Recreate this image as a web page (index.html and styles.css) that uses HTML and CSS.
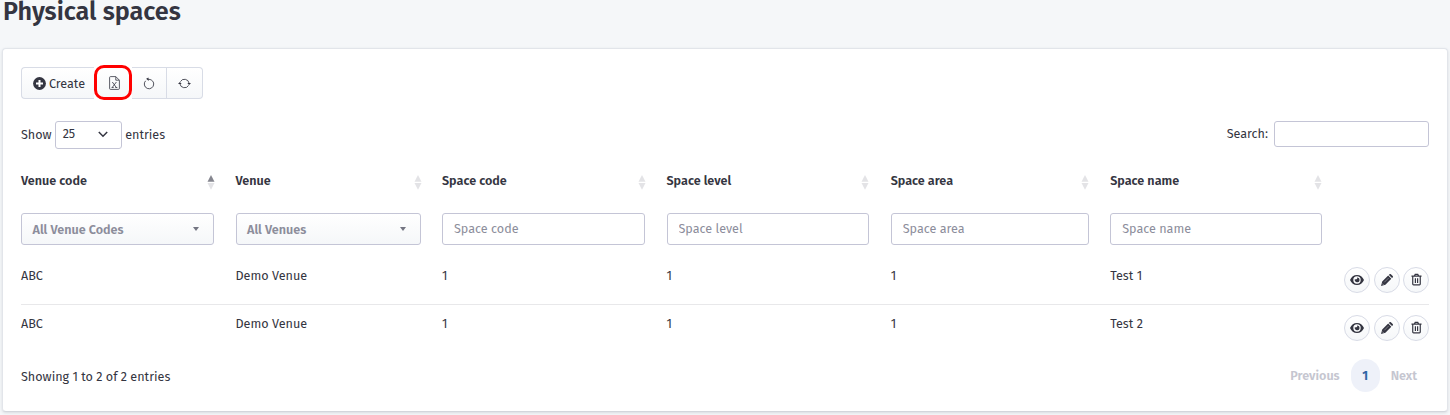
FILE: index.html
```
<!DOCTYPE html>
<html lang="en">
<head>
<meta charset="utf-8">
<title>Physical spaces</title>
<link rel="stylesheet" href="styles.css">
</head>
<body>
<svg class="sprite" aria-hidden="true">
  <symbol id="eye" viewBox="0 0 14 10"><path fill-rule="evenodd" fill="currentColor" d="M7 0C3.8 0 1.300 1.900 0 5c1.300 3.100 3.800 5 7 5s5.700-1.900 7-5C12.700 1.900 10.200 0 7 0zm0 1.300a3.700 3.700 0 1 1 0 7.400a3.700 3.700 0 0 1 0-7.400zm0 1.100c.5.700.2 1.700-.6 1.900-.6.200-1.100.1-1.500-.2A2.400 2.400 0 1 0 7 2.400z"/></symbol>
  <symbol id="pencil" viewBox="0 0 12 12"><path fill="currentColor" d="M1.200 7.500 7.200 1.600 10.300 4.700 4.400 10.700 0 12zM7.900.9 8.500.3c.4-.4 1-.4 1.400 0l1.800 1.800c.4.400.4 1 0 1.400L11 4.100z"/><path d="M3.300 8.300 7.700 3.900" stroke="#fff" stroke-width=".35"/><path d="M1.300 9.600 2.400 10.700" stroke="#fff" stroke-width=".6"/></symbol>
  <symbol id="trash" viewBox="0 0 12 13"><path fill="none" stroke="currentColor" stroke-width="1.300" d="M.5 2.900h11M3.700 2.700 4.600.9h2.800l.9 1.800M1.900 3v8.400c0 .5.300.9.900.9h6.400c.6 0 .9-.4.900-.9V3M4.800 5v5.300M7.200 5v5.300"/></symbol>
  <symbol id="sort" viewBox="0 0 8 15"><path class="up" d="M4 0 7.500 6.800h-7z"/><path class="down" d="M4 14.700 7.500 7.900h-7z"/></symbol>
</svg>
<h1 class="title">Physical spaces</h1>
<main class="card">
  <div class="toolbar">
    <button class="tool create"><svg width="13" height="13" viewBox="0 0 13 13"><circle cx="6.500" cy="6.500" r="6.400" fill="#343541"/><path d="M6.500 3v7M3 6.500h7" stroke="#fff" stroke-width="2"/></svg><span>Create</span></button>
    <button class="tool export" aria-label="Export"><svg width="11" height="14" viewBox="0 0 11 14" fill="none" stroke="#343541"><path d="M.6 1.500c0-.5.300-.9.900-.9h5.300l3.600 3.600v8.300c0 .5-.3.900-.9.900h-8c-.6 0-.9-.4-.9-.9zM6.800.8v3.400h3.400M3.300 6l4 5.500M7.400 6l-4.200 5.500M2.700 11.500h2M6.300 11.500h2" stroke-width=".8"/></svg></button>
    <button class="tool" aria-label="Reset"><svg width="12" height="13" viewBox="0 0 12 13"><path d="M4.800 2.400C8 1.900 10.700 4.200 10.700 7A4.700 4.700 0 1 1 2.600 3.800" fill="none" stroke="#343541" stroke-width=".85"/><path d="M3.100 1.700 5.500.5 5.700 3.900z" fill="#343541"/></svg></button>
    <button class="tool" aria-label="Reload"><svg width="13" height="11" viewBox="0 0 13 11"><path d="M2.400 3.600a4.700 4.700 0 0 1 8.700 1.600M10.600 7.400A4.700 4.700 0 0 1 1.900 5.800" fill="none" stroke="#343541" stroke-width=".85"/><path d="M9.300 5H13L11.100 7zM0 6h3.700L1.900 4z" fill="#343541"/></svg></button>
  </div>
  <div class="controls">
    <div class="length"><span>Show</span><div class="select"><span>25</span><svg width="10" height="7" viewBox="0 0 10 7"><path d="M.8 1 5 5.300 9.200 1" fill="none" stroke="#343541" stroke-width="1.500"/></svg></div><span>entries</span></div>
    <label class="search"><span>Search:</span><input type="text" aria-label="Search"></label>
  </div>
  <div class="row head">
    <div class="th"><span>Venue code</span><svg class="sort asc"><use href="#sort"/></svg></div>
    <div class="th"><span>Venue</span><svg class="sort"><use href="#sort"/></svg></div>
    <div class="th"><span>Space code</span><svg class="sort"><use href="#sort"/></svg></div>
    <div class="th"><span>Space level</span><svg class="sort"><use href="#sort"/></svg></div>
    <div class="th"><span>Space area</span><svg class="sort"><use href="#sort"/></svg></div>
    <div class="th"><span>Space name</span><svg class="sort"><use href="#sort"/></svg></div>
  </div>
  <div class="row filters">
    <div class="dropdown"><span>All Venue Codes</span><i class="caret"></i></div>
    <div class="dropdown"><span>All Venues</span><i class="caret"></i></div>
    <input class="field" placeholder="Space code">
    <input class="field" placeholder="Space level">
    <input class="field" placeholder="Space area">
    <input class="field" placeholder="Space name">
  </div>
  <div class="row data">
    <span>ABC</span><span>Demo Venue</span><span>1</span><span>1</span><span>1</span><span>Test 1</span>
    <div class="actions"><button class="round" aria-label="View"><svg width="14" height="10"><use href="#eye"/></svg></button><button class="round" aria-label="Edit"><svg width="12" height="12"><use href="#pencil"/></svg></button><button class="round" aria-label="Delete"><svg width="11" height="13"><use href="#trash"/></svg></button></div>
  </div>
  <div class="row data">
    <span>ABC</span><span>Demo Venue</span><span>1</span><span>1</span><span>1</span><span>Test 2</span>
    <div class="actions"><button class="round" aria-label="View"><svg width="14" height="10"><use href="#eye"/></svg></button><button class="round" aria-label="Edit"><svg width="12" height="12"><use href="#pencil"/></svg></button><button class="round" aria-label="Delete"><svg width="11" height="13"><use href="#trash"/></svg></button></div>
  </div>
  <div class="footer">
    <span>Showing 1 to 2 of 2 entries</span>
    <nav class="pager"><span>Previous</span><b class="current">1</b><span>Next</span></nav>
  </div>
</main>
</body>
</html>
```
FILE: styles.css
```
* { box-sizing: border-box; }
body {
  margin: 0;
  height: 415px;
  overflow: hidden;
  background: #f5f7f9;
  color: #343541;
  font: 12.6px/18px "Fira Sans", "Noto Sans", sans-serif;
}
button, input { font: inherit; color: inherit; margin: 0; }
svg { display: block; flex: none; }
.sprite { display: none; }
.title {
  margin: 0 0 0 3px;
  height: 48px;
  font-size: 25.2px;
  line-height: 24px;
  font-weight: 600;
}
.card {
  margin: 0 2px;
  height: 364px;
  padding: 18px 18px 0 18px;
  background: #fff;
  border: 1px solid #e2e5ea;
  border-bottom-color: #d3d6dc;
  border-radius: 4px;
  box-shadow: 0 1px 3px rgba(50, 60, 80, 0.14);
}
.toolbar { display: flex; width: 182px; height: 32px; }
.tool {
  display: flex;
  align-items: center;
  justify-content: center;
  gap: 4px;
  width: 35px;
  padding: 0;
  border: 1px solid #d8dce6;
  border-left-width: 0;
  background: linear-gradient(#fff, #f5f7f9);
}
.tool:last-child { width: 36px; border-radius: 0 4px 4px 0; }
.create { width: 73px; gap: 3px; padding-left: 2px; border-left-width: 1px; border-right: 0; border-radius: 4px 0 0 4px; }
.create span { padding-top: 1px; }
.export {
  width: 38px;
  height: 35px;
  margin: -2px 0 0;
  padding-left: 2px;
  border: 3px solid #ff0000;
  border-radius: 10px;
}
.controls { display: flex; justify-content: space-between; margin-top: 22px; height: 28px; }
.length { display: flex; align-items: center; gap: 3.5px; }
.select {
  display: flex;
  align-items: center;
  justify-content: space-between;
  width: 67px;
  height: 28px;
  margin-left: -0.5px;
  padding: 0 13px 2px 7px;
  border: 1px solid #c4c5d6;
  border-radius: 3px;
}
.search { display: flex; height: 26px; align-items: center; gap: 6px; }
.search input { width: 155px; height: 26px; border: 1px solid #c4c5d6; border-radius: 3px; }
.row {
  display: grid;
  grid-template-columns: 193px 185px 203px 202.7px 198px 212px 1fr;
  column-gap: 21.5px;
}
.head { height: 36px; margin-top: 23px; }
.th { display: flex; justify-content: space-between; font-weight: 600; }
.sort { width: 8px; height: 15px; margin: 3px -1px 0 0; fill: #e3e3e6; }
.th:nth-child(n+4) .sort { margin-right: 0; }
.asc { --up: #85868f; }
.up { fill: var(--up, #e3e3e6); }
.filters { height: 33px; margin-top: 5px; }
.field, .dropdown {
  min-width: 0;
  width: 100%;
  height: 32px;
  padding: 0 11px 2px;
  border: 1px solid #c4c5d6;
  border-radius: 3px;
}
.field::placeholder { color: #8c8d9b; opacity: 1; }
.dropdown {
  display: flex;
  align-items: center;
  justify-content: space-between;
  padding: 0 14px 0 10.5px;
  background: linear-gradient(#fff, #f5f7f9);
  color: #8c8d9b;
  font-weight: 600;
}
.dropdown span { padding-top: 1px; }
.caret { border: 3.5px solid transparent; border-top: 4px solid #747582; border-bottom: 0; }
.data { height: 48px; padding-top: 10px; margin-top: 11px; }
.data + .data { height: 49px; margin-top: -1px; border-top: 1px solid #e8e8ea; }
.actions { display: flex; justify-content: flex-end; gap: 3.5px; }
.round {
  display: flex;
  align-items: center;
  justify-content: center;
  width: 26px;
  height: 26px;
  padding: 0 0 1px;
  border: 1px solid #d8dbe6;
  border-radius: 50%;
  background: linear-gradient(#fff, #f5f7f9);
}
.footer { display: flex; justify-content: space-between; align-items: center; height: 33px; margin-top: 6px; }
.footer > span { padding-top: 2px; }
.pager { display: flex; align-items: center; gap: 11px; padding-right: 12px; color: #c5c6d0; font-weight: 600; }
.current {
  width: 29px;
  height: 33px;
  border-radius: 15px;
  background: #eef1f9;
  color: #2f65a5;
  font-weight: 700;
  line-height: 33px;
  text-align: center;
}
```
